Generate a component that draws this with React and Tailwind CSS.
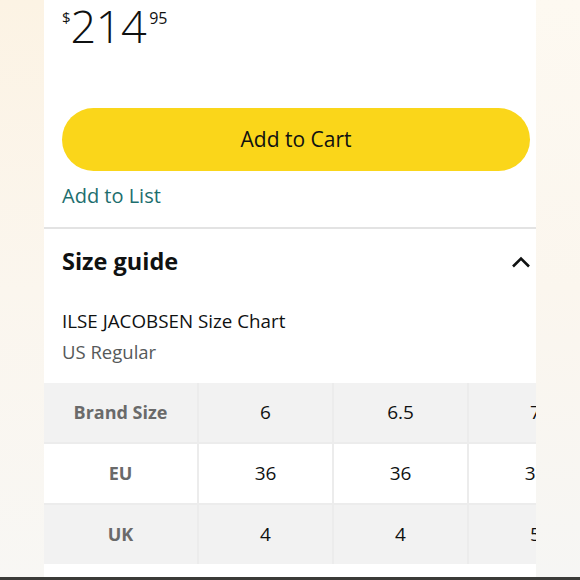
import React from 'react';

const rows = [
    { label: 'Brand Size', values: ['6', '6.5', '7'], shade: true },
    { label: 'EU', values: ['36', '36', '37'], shade: false },
    { label: 'UK', values: ['4', '4', '5'], shade: true },
];

const ChevronUp = () => (
    <svg width="20" height="12" viewBox="0 0 20 12" fill="none">
        <path d="M2 10.5 L10 2.5 L18 10.5" stroke="#0f1111" strokeWidth="2.6" />
    </svg>
);

const App = () => {
    return (
        <div className="w-[580px] h-[580px] flex flex-col bg-[#fbf6ee] overflow-hidden font-['Open_Sans',sans-serif]">
            <div className="flex flex-1 min-h-0">
                <div className="w-[44px] bg-gradient-to-b from-[#fcf3e4] via-[#fbf6ee] to-[#f8f7f4]" />
                <div className="w-[492px] bg-white overflow-hidden flex flex-col">
                    <div className="pl-[18px] flex items-start text-[#0f1111]">
                        <span className="text-[15px] leading-none mt-[10px]">$</span>
                        <span className="text-[45px] font-light leading-[52px] tracking-[-0.5px]">214</span>
                        <span className="text-[16px] leading-none mt-[10px] ml-[3px]">95</span>
                    </div>

                    <div className="pl-[18px] pr-[6px] mt-[56px]">
                        <div className="h-[63px] rounded-full bg-[#fad61a] flex items-center justify-center text-[21px] text-[#0f1111]">
                            Add to Cart
                        </div>
                    </div>

                    <div className="pl-[18px] mt-[11px] text-[20px] text-[#1d6e6e] leading-[28px]">Add to List</div>

                    <div className="mt-[17px] h-[2px] bg-[#e3e3e3]" />

                    <div className="pl-[18px] pr-[5px] mt-[16px] flex items-center justify-between">
                        <span className="text-[23.5px] font-bold text-[#0f1111] leading-[32px]">Size guide</span>
                        <span className="mt-[2px]"><ChevronUp /></span>
                    </div>

                    <div className="pl-[18px] mt-[31px] text-[18.8px] text-[#0f1111] leading-[26px]">ILSE JACOBSEN Size Chart</div>
                    <div className="pl-[18px] mt-[5px] text-[18.5px] text-[#565959] leading-[26px]">US Regular</div>

                    <div className="mt-[18px] grid grid-cols-[153px_133px_133px_133px] gap-[2px] bg-[#ececec] w-[560px]">
                        {rows.map((row) => (
                            <React.Fragment key={row.label}>
                                <div className={`h-[59px] flex items-center justify-center text-[18px] font-bold text-[#6a6a6a] ${row.shade ? 'bg-[#f2f2f2]' : 'bg-white'}`}>
                                    {row.label}
                                </div>
                                {row.values.map((v, i) => (
                                    <div key={i} className={`h-[59px] flex items-center justify-center text-[19px] text-[#0f1111] ${row.shade ? 'bg-[#f2f2f2]' : 'bg-white'}`}>
                                        {v}
                                    </div>
                                ))}
                            </React.Fragment>
                        ))}
                    </div>
                </div>
                <div className="flex-1 bg-gradient-to-b from-[#fdf9f1] via-[#fbf6ee] to-[#f6f6f4]" />
            </div>
            <div className="h-[3px] bg-[#3b3b38]" />
        </div>
    );
};

export default App;
